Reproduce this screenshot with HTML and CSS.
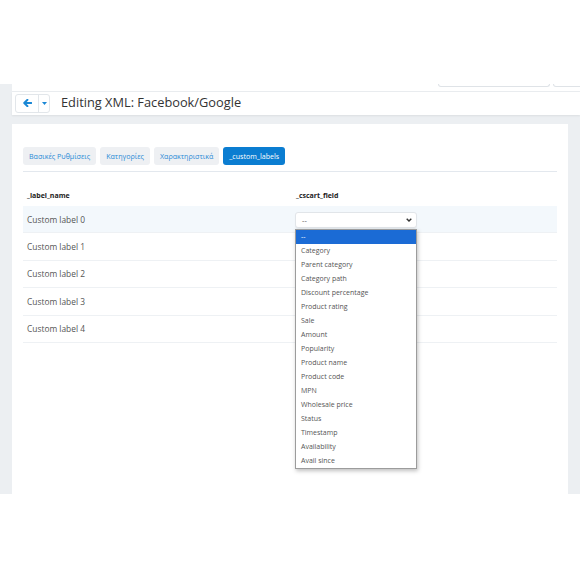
FILE: index.html
```html
<!DOCTYPE html>
<html>
<head>
<meta charset="utf-8">
<title>Editing XML</title>
<link rel="stylesheet" href="styles.css">
</head>
<body>
<div class="top"></div>
<div class="page">
  <div class="main">
    <div class="toolbar">
      <span class="stub stub1"></span>
      <span class="stub stub2"></span>
    </div>
    <div class="header">
      <div class="btn-group">
        <span class="btn btn-back">
          <svg width="9" height="8" viewBox="0 0 9 8"><path d="M4.5 0.8 L1.2 4 L4.5 7.2 M1.5 4 H8.5" fill="none" stroke="#1a87d5" stroke-width="1.9" stroke-linecap="round" stroke-linejoin="round"/></svg>
        </span>
        <span class="btn btn-caret">
          <svg width="5" height="3" viewBox="0 0 5 3"><path d="M0 0 H5 L2.5 3 Z" fill="#1a87d5"/></svg>
        </span>
      </div>
      <h1 class="title">Editing XML: Facebook/Google</h1>
    </div>
    <div class="card">
      <div class="tabs">
        <span class="tab">Βασικές Ρυθμίσεις</span>
        <span class="tab">Κατηγορίες</span>
        <span class="tab">Χαρακτηριστικά</span>
        <span class="tab active">_custom_labels</span>
      </div>
      <div class="grid">
        <div class="row head">
          <div class="cell c1">_label_name</div>
          <div class="cell c2">_cscart_field</div>
        </div>
        <div class="row hl">
          <div class="cell c1">Custom label 0</div>
          <div class="cell c2">
            <div class="select-wrap">
              <div class="select">
                <span>--</span>
                <svg width="6" height="4" viewBox="0 0 6 4"><path d="M0.7 0.7 L3 3 L5.3 0.7" fill="none" stroke="#333" stroke-width="1.4"/></svg>
              </div>
              <ul class="dropdown">
                <li class="sel">--</li>
                <li>Category</li>
                <li>Parent category</li>
                <li>Category path</li>
                <li>Discount percentage</li>
                <li>Product rating</li>
                <li>Sale</li>
                <li>Amount</li>
                <li>Popularity</li>
                <li>Product name</li>
                <li>Product code</li>
                <li>MPN</li>
                <li>Wholesale price</li>
                <li>Status</li>
                <li>Timestamp</li>
                <li>Availability</li>
                <li>Avail since</li>
              </ul>
            </div>
          </div>
        </div>
        <div class="row">
          <div class="cell c1">Custom label 1</div>
          <div class="cell c2"></div>
        </div>
        <div class="row">
          <div class="cell c1">Custom label 2</div>
          <div class="cell c2"></div>
        </div>
        <div class="row">
          <div class="cell c1">Custom label 3</div>
          <div class="cell c2"></div>
        </div>
        <div class="row">
          <div class="cell c1">Custom label 4</div>
          <div class="cell c2"></div>
        </div>
      </div>
    </div>
  </div>
</div>
</body>
</html>
```

FILE: styles.css
```css
* { box-sizing: border-box; }
html, body { margin: 0; padding: 0; background: #fff; }
body { font-family: "Open Sans", "Liberation Sans", sans-serif; color: #555; }

.top { height: 84px; background: #fff; }

.page {
  height: 410px;
  background: #eceff2;
  padding-left: 12px;
  overflow: hidden;
}
.main { width: 568px; }

.toolbar {
  height: 8px;
  background: #fff;
  border-bottom: 1px solid #eaedf0;
  display: flex;
  justify-content: flex-end;
  align-items: flex-start;
  gap: 3px;
  overflow: hidden;
}
.stub {
  display: block;
  height: 3px;
  border: 1px solid #dfe3e7;
  border-top: none;
  border-radius: 0 0 3px 3px;
}
.stub1 { width: 112px; }
.stub2 { width: 30px; margin-right: -3px; }

.header {
  height: 23px;
  background: #fff;
  display: flex;
  align-items: center;
  padding-left: 3px;
  box-shadow: 0 1px 2px rgba(0, 0, 0, 0.07);
  position: relative;
}
.btn-group {
  display: flex;
  height: 19px;
  border: 1px solid #e2e6ea;
  border-radius: 3px;
  background: #fff;
  margin-top: -1px;
}
.btn {
  display: flex;
  align-items: center;
  justify-content: center;
}
.btn-back { width: 23px; border-right: 1px solid #e2e6ea; }
.btn-caret { width: 10px; }
.title {
  margin: 0 0 0 11px;
  font-size: 12.8px;
  font-weight: 400;
  color: #333;
  line-height: 1;
  position: relative;
  top: -1px;
}

.card {
  margin-top: 9px;
  width: 556px;
  height: 380px;
  background: #fff;
  padding: 23px 11px 0 11px;
}

.tabs {
  display: flex;
  gap: 4px;
  padding-bottom: 6px;
  border-bottom: 1px solid #e3e8ee;
}
.tab {
  height: 18px;
  line-height: 18px;
  padding: 0 6px;
  font-size: 7.1px;
  color: #2a8ad6;
  background: #eef0f3;
  border-radius: 3px;
  white-space: nowrap;
}
.tab.active { background: #0b7dd1; color: #fff; }

.grid { font-size: 8.4px; }
.row {
  display: grid;
  grid-template-columns: 272px 1fr;
  height: 27.4px;
  border-bottom: 1px solid #eef1f4;
  align-items: center;
}
.row.head {
  height: 34px;
  align-items: end;
  padding-bottom: 6px;
  border-bottom: none;
  font-weight: 700;
  color: #222;
  font-size: 7px;
}
.row.hl { background: #f3f8fc; }
.cell.c1 { padding-left: 4px; }
.row.head .c2 { padding-left: 1px; }

.select-wrap { position: relative; width: 122px; margin-top: 1px; }
.select {
  height: 16px;
  border: 1px solid #e1e5e9;
  border-radius: 3px;
  background: #fff;
  box-shadow: 0 1px 1px rgba(0, 0, 0, 0.05);
  display: flex;
  align-items: center;
  justify-content: space-between;
  padding: 0 4px 0 6px;
  color: #555;
  font-size: 7.4px;
}
.dropdown {
  position: absolute;
  top: 17px;
  left: 0;
  width: 122px;
  margin: 0;
  padding: 0;
  list-style: none;
  background: #fff;
  border: 1px solid #9c9c9c;
  box-shadow: 1px 2px 4px rgba(0, 0, 0, 0.25);
  z-index: 5;
}
.dropdown li {
  height: 14px;
  line-height: 14px;
  padding-left: 5px;
  font-size: 7px;
  color: #555;
  white-space: nowrap;
}
.dropdown li.sel { background: #1b6bd5; color: #fff; }
```
